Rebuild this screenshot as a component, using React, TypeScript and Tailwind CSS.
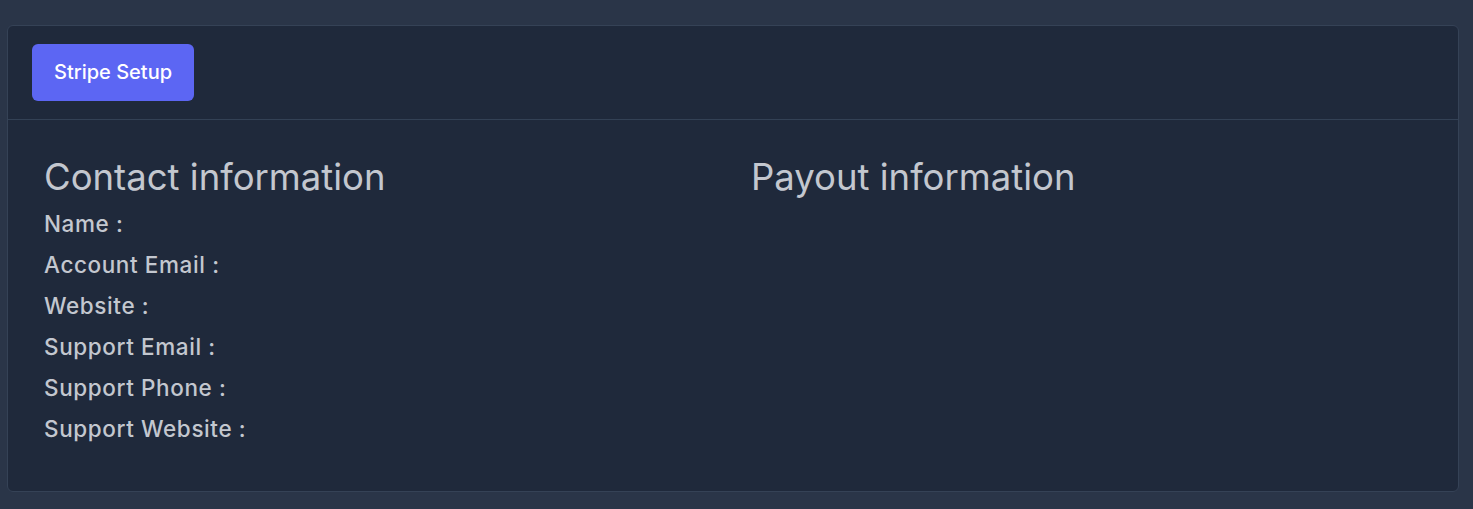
export default function App() {
  const fields = [
    'Name :',
    'Account Email :',
    'Website :',
    'Support Email :',
    'Support Phone :',
    'Support Website :',
  ];

  return (
    <div className="min-h-[509px] bg-[#2a3548] pt-[25px] pl-[7px] pr-[14px] pb-4 font-['Inter',sans-serif]">
      <div className="rounded-md border border-[#354256] bg-[#1f293b]">
        {/* header */}
        <div className="border-b border-[#334155] px-6 pt-[18px] pb-[18px]">
          <button className="h-[57px] rounded-md bg-[#5c66f3] px-[22px] pb-[2px] text-[20px] font-medium text-white">
            Stripe Setup
          </button>
        </div>

        {/* body */}
        <div className="grid grid-cols-[707px_1fr] px-[36px] pt-[36px] pb-[42px] text-[#c3c7cf]">
          <div>
            <h3 className="mb-[4px] text-[36.5px] leading-[43px] font-normal">Contact information</h3>
            <div className="flex flex-col">
              {fields.map((f) => (
                <p key={f} className="text-[22.5px] leading-[41px] font-medium tracking-[0.6px]">
                  {f}
                </p>
              ))}
            </div>
          </div>
          <div>
            <h3 className="text-[36.5px] leading-[43px] font-normal">Payout information</h3>
          </div>
        </div>
      </div>
    </div>
  );
}
